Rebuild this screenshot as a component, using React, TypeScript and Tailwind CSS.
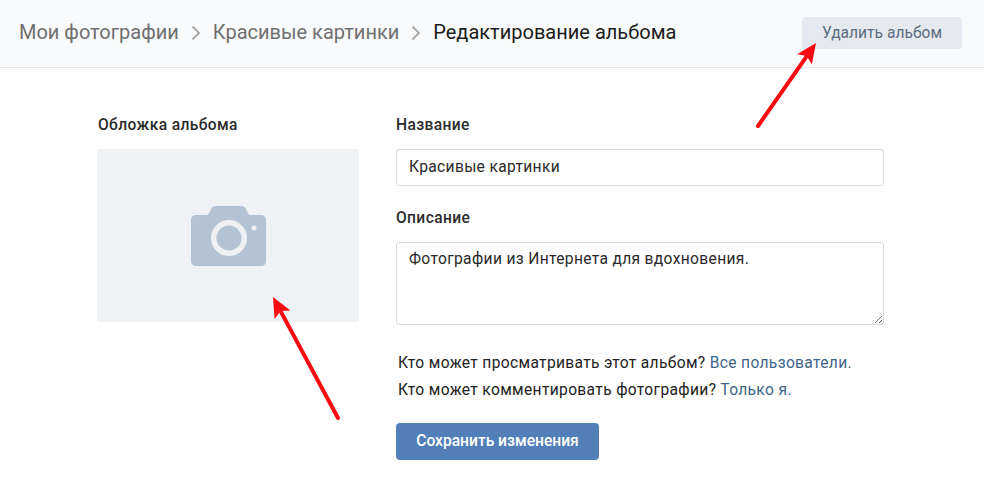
function CameraIcon() {
  return (
    <svg width="75" height="60" viewBox="0 0 75 60" fill="none">
      <path
        d="M5 9h10c1.500 0 2.300-.6 3-1.800l2-4C21 1 22.300 0 24.500 0h26c2.200 0 3.500 1 4.500 3.200l2 4c.7 1.200 1.500 1.800 3 1.800h10c3 0 5 2 5 5v41c0 3-2 5-5 5H5c-3 0-5-2-5-5V14c0-3 2-5 5-5z"
        fill="#b4c3d3"
      />
      <circle cx="38" cy="32" r="15.300" fill="none" stroke="#eef0f4" strokeWidth="5.500" />
      <circle cx="63" cy="22" r="2.500" fill="#eef0f4" />
    </svg>
  )
}

function RedArrow({ x1, y1, x2, y2 }: { x1: number; y1: number; x2: number; y2: number }) {
  const angle = Math.atan2(y2 - y1, x2 - x1)
  const head = 22
  const spread = 0.42
  const p1 = [x2 - head * Math.cos(angle - spread), y2 - head * Math.sin(angle - spread)]
  const p2 = [x2 - head * Math.cos(angle + spread), y2 - head * Math.sin(angle + spread)]
  const neck = [x2 - 16 * Math.cos(angle), y2 - 16 * Math.sin(angle)]
  return (
    <>
      <line x1={x1} y1={y1} x2={neck[0]} y2={neck[1]} stroke="#f80a10" strokeWidth="4" strokeLinecap="round" />
      <polygon points={`${x2},${y2} ${p1[0]},${p1[1]} ${neck[0]},${neck[1]} ${p2[0]},${p2[1]}`} fill="#f80a10" />
    </>
  )
}

export default function App() {
  return (
    <div className="relative w-[984px] h-[477px] overflow-hidden bg-white font-['Roboto',sans-serif] text-[15.6px] text-[#222222]">
      {/* Шапка */}
      <div className="h-[68px] border-b border-[#e3e6ea] bg-[#f9fafc] flex items-center justify-between pl-[19px] pr-[22px]">
        <div className="flex items-center text-[20px] text-[#6f6f6f] pb-[3px]">
          <span>Мои фотографии</span>
          <svg width="12" height="16" viewBox="0 0 12 16" className="mx-[11px] mt-[2px]" fill="none">
            <path d="M2.500 1.500L9 8l-6.500 6.500" stroke="#a9a9a9" strokeWidth="1.800" />
          </svg>
          <span>Красивые картинки</span>
          <svg width="12" height="16" viewBox="0 0 12 16" className="mx-[11px] mt-[2px]" fill="none">
            <path d="M2.500 1.500L9 8l-6.500 6.500" stroke="#a9a9a9" strokeWidth="1.800" />
          </svg>
          <span className="text-[#1c1c1c]">Редактирование альбома</span>
        </div>
        <button className="w-[160px] h-[32px] pt-[1px] rounded-[4px] bg-[#e6eaf0] text-[#5b6b80] mb-[1px]">
          Удалить альбом
        </button>
      </div>

      {/* Форма */}
      <div className="flex pl-[97px] pt-[47px]">
        <div className="w-[262px] mr-[37px]">
          <div className="font-medium tracking-[0.36px] text-[#2c2c2c] leading-[20px] ml-[1px]">Обложка альбома</div>
          <div className="mt-[14px] h-[173px] bg-[#f0f2f5] flex items-center justify-center">
            <CameraIcon />
          </div>
        </div>

        <div className="w-[488px]">
          <div className="font-medium tracking-[0.36px] text-[#2c2c2c] leading-[20px]">Название</div>
          <input
            defaultValue="Красивые картинки"
            className="mt-[14px] block w-full h-[37px] px-[12px] pb-[2px] rounded-[3px] border border-[#d8d9dc] tracking-[0.33px] text-[#2a2a2a] outline-none"
          />
          <div className="mt-[22px] font-medium tracking-[0.36px] text-[#2c2c2c] leading-[20px]">Описание</div>
          <textarea
            defaultValue="Фотографии из Интернета для вдохновения."
            className="mt-[14px] block w-full h-[83px] px-[12px] py-[6px] rounded-[3px] border border-[#d8d9dc] tracking-[0.33px] leading-[20px] text-[#2a2a2a] outline-none"
          />
          <p className="mt-[28px] ml-[2px] tracking-[0.33px] leading-[20px]">
            Кто может просматривать этот альбом? <a className="text-[#3f6489]">Все пользователи</a>
            <span className="text-[#3f6489]">.</span>
          </p>
          <p className="mt-[7px] ml-[2px] tracking-[0.33px] leading-[20px]">
            Кто может комментировать фотографии? <a className="text-[#3f6489]">Только я</a>
            <span className="text-[#3f6489]">.</span>
          </p>
          <button className="mt-[23px] w-[203px] h-[37px] pt-[1px] rounded-[4px] bg-[#527fb8] text-white font-medium">
            Сохранить изменения
          </button>
        </div>
      </div>

      {/* Стрелки поверх скриншота */}
      <svg className="absolute inset-0 pointer-events-none" width="984" height="477">
        <RedArrow x1={758} y1={126} x2={816} y2={43} />
        <RedArrow x1={338} y1={418} x2={273} y2={297} />
      </svg>
    </div>
  )
}
